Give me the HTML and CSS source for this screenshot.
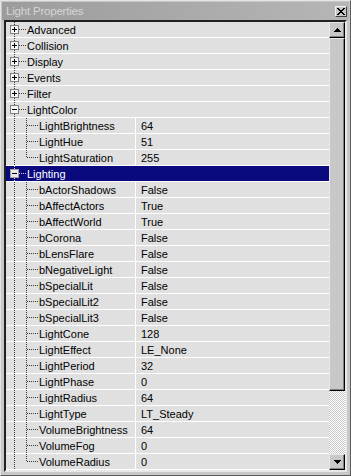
FILE: index.html
```html
<!DOCTYPE html>
<html>
<head>
<meta charset="utf-8">
<link rel="stylesheet" href="styles.css">
</head>
<body>
<div class="window">
  <div class="titlebar">
    <span class="title">Light Properties</span>
    <span class="close"><svg width="8" height="7" viewBox="0 0 8 7" shape-rendering="crispEdges"><path d="M0 0h2v1h-2zM6 0h2v1h-2zM1 1h2v1h-2zM5 1h2v1h-2zM2 2h4v1h-4zM3 3h2v1h-2zM2 4h4v1h-4zM1 5h2v1h-2zM5 5h2v1h-2zM0 6h2v1h-2zM6 6h2v1h-2z" fill="#000"/></svg></span>
  </div>
  <div class="panel">
    <div class="list">
      <div class="row cat"><div class="tree root"><svg class="box" width="9" height="9" shape-rendering="crispEdges"><rect x="0.5" y="0.5" width="8" height="8" fill="#f4f4f4" stroke="#808080"/><path d="M2 4.5h5M4.5 2v5" stroke="#000"/></svg></div><span class="label">Advanced</span></div>
      <div class="row cat"><div class="tree root"><svg class="box" width="9" height="9" shape-rendering="crispEdges"><rect x="0.5" y="0.5" width="8" height="8" fill="#f4f4f4" stroke="#808080"/><path d="M2 4.5h5M4.5 2v5" stroke="#000"/></svg></div><span class="label">Collision</span></div>
      <div class="row cat"><div class="tree root"><svg class="box" width="9" height="9" shape-rendering="crispEdges"><rect x="0.5" y="0.5" width="8" height="8" fill="#f4f4f4" stroke="#808080"/><path d="M2 4.5h5M4.5 2v5" stroke="#000"/></svg></div><span class="label">Display</span></div>
      <div class="row cat"><div class="tree root"><svg class="box" width="9" height="9" shape-rendering="crispEdges"><rect x="0.5" y="0.5" width="8" height="8" fill="#f4f4f4" stroke="#808080"/><path d="M2 4.5h5M4.5 2v5" stroke="#000"/></svg></div><span class="label">Events</span></div>
      <div class="row cat"><div class="tree root"><svg class="box" width="9" height="9" shape-rendering="crispEdges"><rect x="0.5" y="0.5" width="8" height="8" fill="#f4f4f4" stroke="#808080"/><path d="M2 4.5h5M4.5 2v5" stroke="#000"/></svg></div><span class="label">Filter</span></div>
      <div class="row cat"><div class="tree root"><svg class="box" width="9" height="9" shape-rendering="crispEdges"><rect x="0.5" y="0.5" width="8" height="8" fill="#f4f4f4" stroke="#808080"/><path d="M2 4.5h5" stroke="#000"/></svg></div><span class="label">LightColor</span></div>
      <div class="row prop"><div class="name"><div class="tree child"></div><span class="label">LightBrightness</span></div><div class="val">64</div></div>
      <div class="row prop"><div class="name"><div class="tree child"></div><span class="label">LightHue</span></div><div class="val">51</div></div>
      <div class="row prop"><div class="name"><div class="tree child last"></div><span class="label">LightSaturation</span></div><div class="val">255</div></div>
      <div class="row cat sel"><div class="tree root"><svg class="box" width="9" height="9" shape-rendering="crispEdges"><rect x="0.5" y="0.5" width="8" height="8" fill="#e8e8e8" stroke="#a0a0a0"/><path d="M2 4.5h5" stroke="#000"/></svg></div><span class="label">Lighting</span></div>
      <div class="row prop"><div class="name"><div class="tree child"></div><span class="label">bActorShadows</span></div><div class="val">False</div></div>
      <div class="row prop"><div class="name"><div class="tree child"></div><span class="label">bAffectActors</span></div><div class="val">True</div></div>
      <div class="row prop"><div class="name"><div class="tree child"></div><span class="label">bAffectWorld</span></div><div class="val">True</div></div>
      <div class="row prop"><div class="name"><div class="tree child"></div><span class="label">bCorona</span></div><div class="val">False</div></div>
      <div class="row prop"><div class="name"><div class="tree child"></div><span class="label">bLensFlare</span></div><div class="val">False</div></div>
      <div class="row prop"><div class="name"><div class="tree child"></div><span class="label">bNegativeLight</span></div><div class="val">False</div></div>
      <div class="row prop"><div class="name"><div class="tree child"></div><span class="label">bSpecialLit</span></div><div class="val">False</div></div>
      <div class="row prop"><div class="name"><div class="tree child"></div><span class="label">bSpecialLit2</span></div><div class="val">False</div></div>
      <div class="row prop"><div class="name"><div class="tree child"></div><span class="label">bSpecialLit3</span></div><div class="val">False</div></div>
      <div class="row prop"><div class="name"><div class="tree child"></div><span class="label">LightCone</span></div><div class="val">128</div></div>
      <div class="row prop"><div class="name"><div class="tree child"></div><span class="label">LightEffect</span></div><div class="val">LE_None</div></div>
      <div class="row prop"><div class="name"><div class="tree child"></div><span class="label">LightPeriod</span></div><div class="val">32</div></div>
      <div class="row prop"><div class="name"><div class="tree child"></div><span class="label">LightPhase</span></div><div class="val">0</div></div>
      <div class="row prop"><div class="name"><div class="tree child"></div><span class="label">LightRadius</span></div><div class="val">64</div></div>
      <div class="row prop"><div class="name"><div class="tree child"></div><span class="label">LightType</span></div><div class="val">LT_Steady</div></div>
      <div class="row prop"><div class="name"><div class="tree child"></div><span class="label">VolumeBrightness</span></div><div class="val">64</div></div>
      <div class="row prop"><div class="name"><div class="tree child"></div><span class="label">VolumeFog</span></div><div class="val">0</div></div>
      <div class="row prop"><div class="name"><div class="tree child last"></div><span class="label">VolumeRadius</span></div><div class="val">0</div></div>
    </div>
    <div class="scrollbar">
      <div class="sbtn"><svg width="7" height="4" shape-rendering="crispEdges"><path d="M3 0h1v1h1v1h1v1h1v1h-7v-1h1v-1h1v-1h1z" fill="#000"/></svg></div>
      <div class="thumb"></div>
      <div class="track"></div>
      <div class="sbtn"><svg width="7" height="4" shape-rendering="crispEdges"><path d="M0 0h7v1h-1v1h-1v1h-1v1h-1v-1h-1v-1h-1v-1h-1z" fill="#000"/></svg></div>
    </div>
  </div>
</div>
</body>
</html>
```
FILE: styles.css
```css
html, body {
  margin: 0;
  padding: 0;
  background: #c8c8c8;
}
body {
  font-family: "Liberation Sans", Arial, sans-serif;
  font-size: 11px;
  color: #000;
}
.window {
  width: 351px;
  height: 476px;
  box-sizing: border-box;
  border: 1px solid;
  border-color: #e4e4e4 #5a5a5a #5a5a5a #e4e4e4;
  padding: 1px;
  background: #c8c8c8;
  display: flex;
  flex-direction: column;
}
.titlebar {
  height: 18px;
  flex: none;
  background: linear-gradient(to right, #9c9c9c, #b6b6b6);
  display: flex;
  align-items: center;
  justify-content: space-between;
  padding: 0 2px 0 4px;
}
.title {
  color: #d6d6d6;
  font-size: 11.5px;
  letter-spacing: -0.2px;
  line-height: 18px;
}
.close {
  width: 12px;
  height: 11px;
  box-sizing: border-box;
  background: #c8c8c8;
  border: 1px solid;
  border-color: #f0f0f0 #404040 #404040 #f0f0f0;
  display: flex;
  align-items: center;
  justify-content: center;
}
.panel {
  margin: 0 2px 2px 2px;
  border: 2px solid;
  border-color: #202020 #e8e8e8 #e8e8e8 #202020;
  display: flex;
  height: 448px;
  flex: none;
  overflow: hidden;
}
.list {
  flex: 1;
  display: flex;
  flex-direction: column;
  background: #fff;
}
.row {
  height: 15px;
  margin-bottom: 1px;
  background: #e0e0e0;
  display: flex;
  align-items: stretch;
  white-space: nowrap;
  --line: #3a3a3a;
}
.label, .val {
  box-sizing: border-box;
  padding-top: 2px;
  line-height: 13px;
}
.row.sel {
  background: #0a0a7e;
  color: #fff;
  --line: #d0d0d0;
}
.name {
  width: 129px;
  flex: none;
  display: flex;
  border-right: 1px solid #fff;
  overflow: hidden;
}
.val {
  flex: 1;
  padding-left: 5px;
}
.tree {
  flex: none;
  display: flex;
  align-items: center;
}
.tree.root {
  width: 21px;
  background:
    repeating-linear-gradient(to bottom, var(--line) 0 1px, transparent 1px 2px) 8px 0 / 1px 100% no-repeat,
    repeating-linear-gradient(to right, var(--line) 0 1px, transparent 1px 2px) 9px 7px / 12px 1px no-repeat;
}
.box {
  margin-left: 4px;
  display: block;
}
.tree.child {
  width: 33px;
  background:
    repeating-linear-gradient(to bottom, #3a3a3a 0 1px, transparent 1px 2px) 8px 0 / 1px 100% no-repeat,
    repeating-linear-gradient(to bottom, #3a3a3a 0 1px, transparent 1px 2px) 20px 0 / 1px 100% no-repeat,
    repeating-linear-gradient(to right, #3a3a3a 0 1px, transparent 1px 2px) 21px 7px / 12px 1px no-repeat;
}
.tree.child.last {
  background:
    repeating-linear-gradient(to bottom, #3a3a3a 0 1px, transparent 1px 2px) 8px 0 / 1px 100% no-repeat,
    repeating-linear-gradient(to bottom, #3a3a3a 0 1px, transparent 1px 2px) 20px 0 / 1px 8px no-repeat,
    repeating-linear-gradient(to right, #3a3a3a 0 1px, transparent 1px 2px) 21px 7px / 12px 1px no-repeat;
}
.scrollbar {
  width: 16px;
  flex: none;
  display: flex;
  flex-direction: column;
  background: #c8c8c8;
}
.sbtn, .thumb {
  box-sizing: border-box;
  background: #c8c8c8;
  border: 1px solid;
  border-color: #e8e8e8 #000 #000 #e8e8e8;
  box-shadow: inset -1px -1px 0 #808080;
}
.sbtn {
  height: 16px;
  flex: none;
  display: flex;
  align-items: center;
  justify-content: center;
}
.thumb {
  height: 353px;
  flex: none;
}
.track {
  flex: 1;
  background: repeating-conic-gradient(#ffffff 0 25%, #c8c8c8 0 50%) 0 0 / 2px 2px;
}
```
